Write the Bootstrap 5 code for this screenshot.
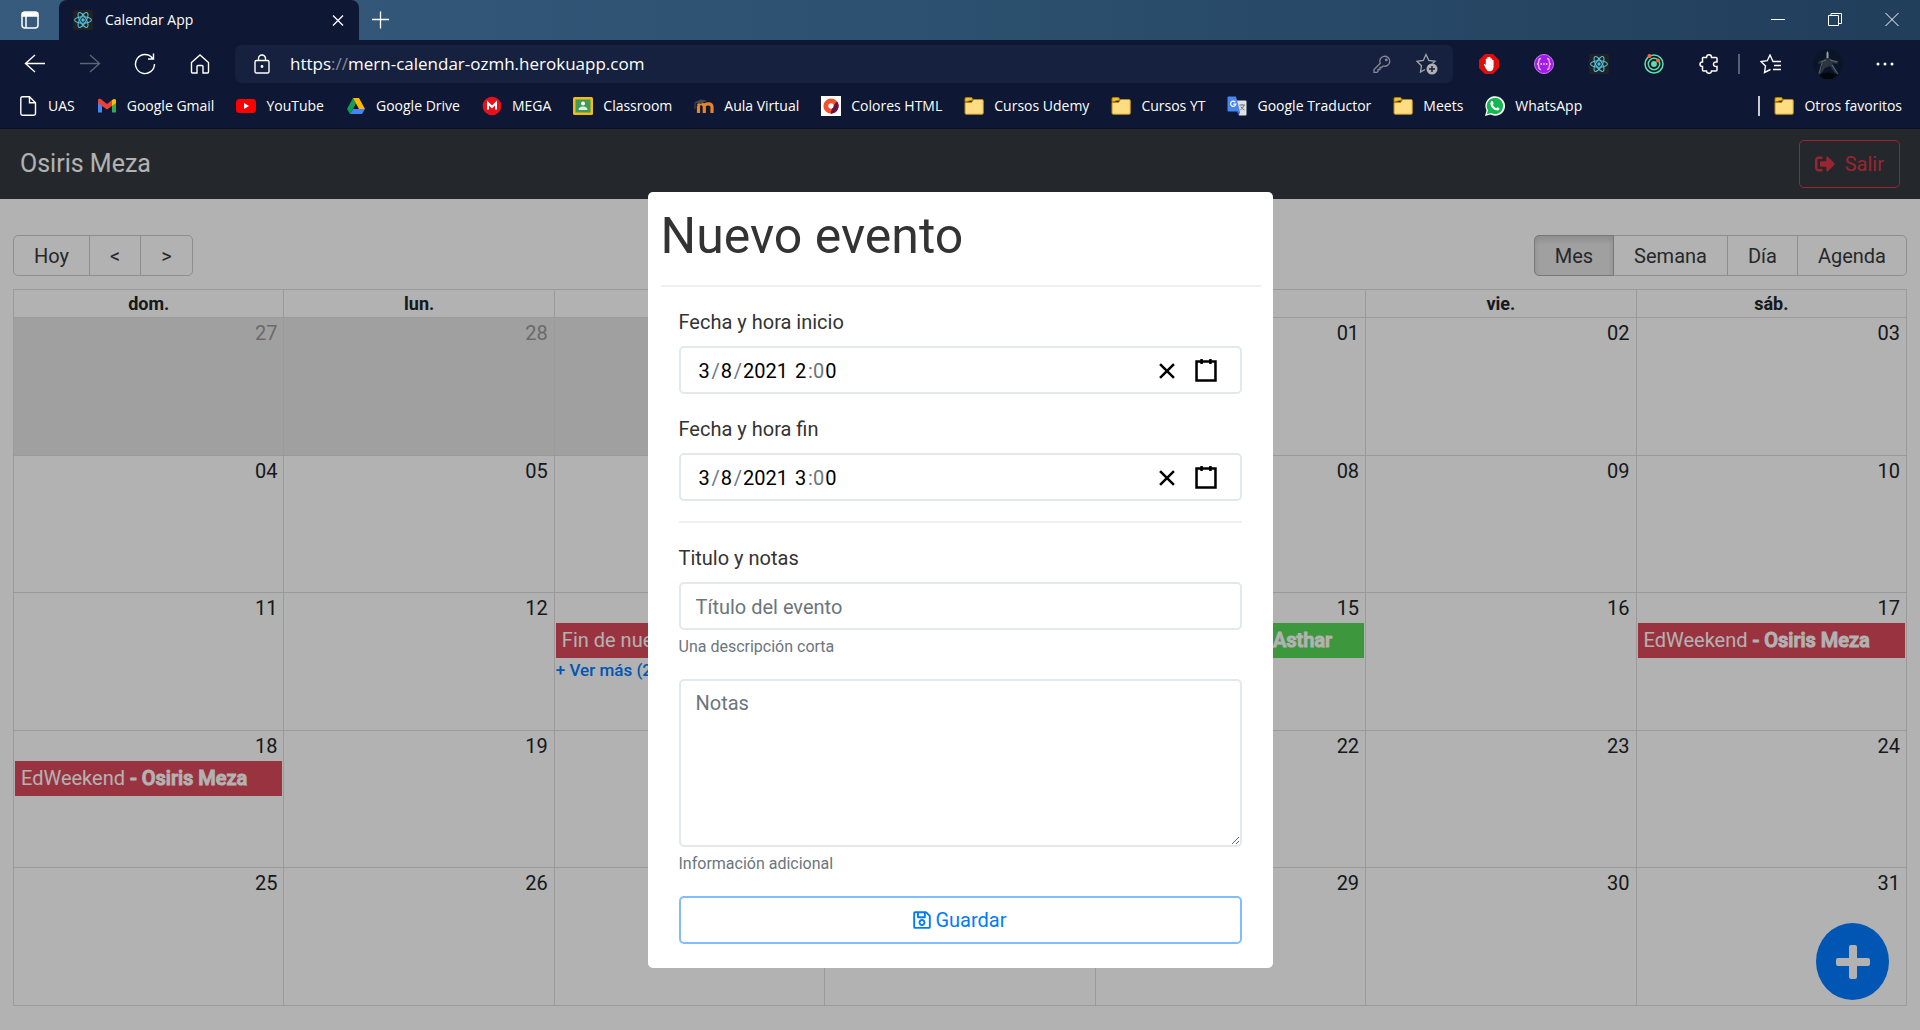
<!DOCTYPE html>
<html lang="es">
<head>
<meta charset="utf-8">
<meta name="viewport" content="width=device-width, initial-scale=1">
<title>Calendar App</title>
<link href="https://cdn.jsdelivr.net/npm/bootstrap@5.3.0/dist/css/bootstrap.min.css" rel="stylesheet">
<style>
  body { font-family: Roboto, "Liberation Sans", sans-serif; font-size: 20px; line-height: 30px; color: #212529; }
  svg { display: block; flex: none; }

  /* Browser window */
  .browser { height: 100vh; }
  .chrome { font-family: "Open Sans", "Noto Sans", sans-serif; color: #fff; background: #0e1733; border-bottom: 1px solid #0a1024; }
  .chrome button { background: none; border: 0; padding: 0; color: inherit; display: flex; align-items: center; justify-content: center; }
  .titlebar { height: 40px; background: linear-gradient(90deg, #365b7d, #2c506f 50%, #213e5b); }
  .tab-menu { width: 59px; }
  .tab-open { width: 300px; height: 40px; background: #0e1733; border-radius: 8px 8px 0 0; padding: 0 13px 0 14px; gap: 12px; font-size: 14px; }
  .tab-new { width: 42px; }
  .win-ctl { width: 57px; }
  .toolbar { height: 48px; padding: 0 7px; }
  .tool { width: 55px; height: 38px; }
  .tool-wide { width: 57px; height: 38px; }
  .address { height: 38px; background: #16213f; border-radius: 6px; padding: 0 4px 0 18px; }
  .url-text { font-size: 17px; margin-left: 19px; }
  .url-text i { font-style: normal; color: #868b9a; }
  .tool-sm { width: 45px; }
  .tool-sep { width: 2px; height: 20px; background: #5b606f; margin: 0 2px; }
  .bookmarks { height: 40px; padding: 0 18px 5px 18px; gap: 22px; font-size: 14px; }
  .bookmarks a { color: #fff; text-decoration: none; display: flex; align-items: center; gap: 10px; white-space: nowrap; }
  .bm-sep { width: 2px; height: 20px; background: #c8cad1; margin-right: -8px; }

  /* Calendar page */
  .site { position: relative; background: #fff; min-height: 0; }
  .site-nav { height: 70px; background: #343a40; padding: 0 20px; }
  .site-nav .navbar-brand { color: #fff; font-size: 25px; padding: 0; }
  .btn { font-size: 20px; line-height: 30px; border-radius: 5px; }
  .btn-exit { color: #dc3545; border-color: #dc3545; padding: 8px 15px; display: flex; align-items: center; gap: 10px; }
  .cal { padding: 36px 13px 24px; min-height: 0; isolation: isolate; }
  .cal-bar { margin-bottom: 13px; }
  .cal-bar .btn { color: #373a3c; background: #fff; border-color: #ccc; padding: 9px 20px 7px; line-height: 23px; }
  .cal-bar .btn.active { background: #e6e6e6; border-color: #adadad; box-shadow: inset 0 4px 6px rgba(0,0,0,.125); }
  .month { table-layout: fixed; width: 100%; border-collapse: collapse; }
  .month th, .month td { border: 1px solid #ddd; padding: 0; }
  .month th { text-align: center; font-size: 18px; font-weight: 700; line-height: 27px; height: 28px; }
  .month tbody tr { height: 20%; }
  .month td { vertical-align: top; text-align: right; }
  .month td.off { background: #e6e6e6; color: #999; }
  .month .num { padding-right: 6px; }
  .ev { display: block; text-align: left; background: #dc4a5c; color: #fff; text-decoration: none; line-height: 35px; padding: 0 6px; white-space: nowrap; overflow: hidden; margin: 0 1px; }
  .ev strong { font-weight: 500; -webkit-text-stroke: 1px currentColor; }
  .ev-green { background: #58d958; text-align: right; padding-right: 32px; }
  .ev-more { display: block; text-align: left; font-size: 17px; font-weight: 500; line-height: 24px; text-decoration: none; color: #007bff; margin-left: 1px; }
  .fab { position: absolute; right: 31px; bottom: 30px; width: 73px; height: 77px; border-radius: 50%; border: 0; background: #007bff; color: #fff; display: flex; align-items: center; justify-content: center; }

  /* Event form */
  .shade { position: absolute; inset: 0; background: rgba(0,0,0,.3); }
  .sheet { width: 625px; max-width: 96%; background: #fff; border-radius: 5px; padding: 14px 12px 4px 13px; color: #333; }
  .sheet h1 { font-size: 50px; line-height: 60px; font-weight: 400; margin: 0; }
  .sheet hr { margin: 20px 0; border-top: 2px solid #f0f0f0; opacity: 1; }
  .sheet hr.first { margin-top: 19px; }
  .fields { padding: 0 19px 0 18px; }
  .fields .grp { margin-bottom: 20px; }
  .fields label { display: block; margin-bottom: 9px; }
  .fields .form-control { border: 2px solid #e3e8ed; border-radius: 5px; font-size: 20px; line-height: 30px; padding: 8px 15px 6px; color: #333; }
  .fields .form-control::placeholder { color: #6c757d; }
  .fields textarea.form-control { height: 168px; resize: vertical; padding-top: 7px; }
  .fields .help { display: block; margin-top: 5px; font-size: 16px; line-height: 24px; color: #6c757d; }
  .fields .dt { height: 48px; padding: 2px 15px 0 17px; color: #6c757d; }
  .dt input { width: 14px; border: 0; outline: 0; padding: 0 1px; font: inherit; color: #000; background: none; }
  .dt input.yr { width: 47px; margin-right: 5px; }
  .dt button { border: 0; background: none; padding: 6px 8px; width: 39px; }
  .dt svg { width: 24px; height: 24px; }
  .btn-save { color: #007bff; border: 2px solid #80bdff; padding: 7px; gap: 4px; margin-bottom: 20px; }
</style>
</head>
<body>
<svg width="0" height="0" class="position-absolute" aria-hidden="true">
  <symbol id="i-react" viewBox="0 0 20 20"><rect width="20" height="20" rx="2" fill="#222"/><g fill="none" stroke="#53c1de" stroke-width="1.100"><ellipse cx="10" cy="10" rx="8.400" ry="3.200"/><ellipse cx="10" cy="10" rx="8.400" ry="3.200" transform="rotate(60 10 10)"/><ellipse cx="10" cy="10" rx="8.400" ry="3.200" transform="rotate(120 10 10)"/></g><circle cx="10" cy="10" r="1.700" fill="#53c1de"/></symbol>
  <symbol id="i-folder" viewBox="0 0 20 20"><path d="M1 6V2.800Q1 1.500 2.300 1.500H7Q8 1.500 8.300 2.500L8.800 4Z" fill="#f5c12e" stroke="#a87c0a"/><path d="M1 6.500H7.500L9.500 3.500H18Q19.300 3.500 19.300 4.800V17Q19.300 18.300 18 18.300H2.200Q1 18.300 1 17Z" fill="#ffdd80" stroke="#b88a14"/></symbol>
</svg>

<div class="browser d-flex flex-column">
  <header class="chrome">
    <div class="titlebar d-flex align-items-center">
      <button class="tab-menu" aria-label="Acciones de pestañas"><svg width="20" height="20" viewBox="0 0 20 20" fill="none" stroke="#fff" stroke-width="1.500"><rect x="2" y="2" width="16" height="16" rx="3"/><path d="M2.500 3H17.500V6H2.500Z" fill="#fff"/><path d="M6 6V18"/></svg></button>
      <div class="tab-open d-flex align-items-center">
        <svg width="20" height="20"><use href="#i-react"/></svg>
        <span class="flex-grow-1">Calendar App</span>
        <button aria-label="Cerrar pestaña"><svg width="16" height="16" viewBox="0 0 16 16" stroke="#fff" stroke-width="1.300"><path d="M3 3.500L13 13.500M13 3.500L3 13.500"/></svg></button>
      </div>
      <button class="tab-new" aria-label="Nueva pestaña"><svg width="18" height="18" viewBox="0 0 18 18" stroke="#fff" stroke-width="1.300"><path d="M9.500 0.500V17.500M1 8.500H18"/></svg></button>
      <div class="d-flex ms-auto">
        <button class="win-ctl" aria-label="Minimizar"><svg width="14" height="14" viewBox="0 0 14 14" stroke="#fff"><path d="M0 6.500H14"/></svg></button>
        <button class="win-ctl" aria-label="Restaurar"><svg width="14" height="14" viewBox="0 0 14 14" stroke="#fff" fill="none"><path d="M0.500 2.500H10.500V12.500H0.500ZM3 2V0.500H13.500V10.500H11"/></svg></button>
        <button class="win-ctl" aria-label="Cerrar"><svg width="14" height="14" viewBox="0 0 14 14" stroke="#fff"><path d="M0.500 0L13.500 13M13.500 0L0.500 13"/></svg></button>
      </div>
    </div>

    <div class="toolbar d-flex align-items-center">
      <button class="tool" aria-label="Atrás"><svg width="22" height="20" viewBox="0 0 22 20" fill="none" stroke="#fff" stroke-width="1.400"><path d="M21 9.500H1.500M11 1L1.500 9.500L11 18"/></svg></button>
      <button class="tool" aria-label="Adelante"><svg width="22" height="20" viewBox="0 0 22 20" fill="none" stroke="#5d6373" stroke-width="1.400"><path d="M1 9.500H20.500M11 1L20.500 9.500L11 18"/></svg></button>
      <button class="tool" aria-label="Actualizar"><svg width="22" height="22" viewBox="0 0 22 22" fill="none" stroke="#fff" stroke-width="1.400"><path d="M20.500 11A9.500 9.500 0 1 1 18.500 5.200M19.500 0.500V6H14"/></svg></button>
      <button class="tool" aria-label="Inicio"><svg width="20" height="20" viewBox="0 0 20 20" fill="none" stroke="#fff" stroke-width="1.400"><path d="M1.500 8.500L10 1L18.500 8.500V18Q18.500 19 17.500 19H13V12.500Q13 11.500 12 11.500H8Q7 11.500 7 12.500V19H2.500Q1.500 19 1.500 18Z"/></svg></button>
      <div class="address d-flex align-items-center flex-grow-1 ms-2">
        <svg width="18" height="20" viewBox="0 0 18 20" fill="none" stroke="#fff" stroke-width="1.400"><rect x="2" y="6.500" width="14" height="12.500" rx="1.500"/><path d="M5.500 6.500V4.500A3.500 3.500 0 0 1 12.500 4.500V6.500"/><circle cx="9" cy="12.500" r=".7" fill="#fff"/></svg>
        <span class="url-text flex-grow-1">https<i>://</i>mern-calendar-ozmh.herokuapp.com</span>
        <button class="tool-sm" aria-label="Contraseña"><svg width="18" height="18" viewBox="0 0 18 18" fill="none" stroke="#85868f" stroke-width="1.300"><path d="M7.200 8.300A5 5 0 1 1 10.200 11L8.500 12.500H7V14.500H5V16.500L4 17.300H1V14.500Z"/><circle cx="13.300" cy="4.900" r=".8"/></svg></button>
        <button class="tool-sm" aria-label="Agregar a favoritos"><svg width="22" height="22" viewBox="0 0 22 22" fill="none" stroke="#a3a3a3" stroke-width="1.300"><path d="M9 16.500L4.500 19L5.500 12.700L1 8.300L7.300 7.400L10 1.500L12.800 7.400L19 8.300L16.500 10.500"/><circle cx="16" cy="16" r="5.500" fill="#b0b0b0" stroke="none"/><path d="M16 13V19M13 16H19" stroke="#16213f" stroke-width="1.500"/></svg></button>
      </div>
      <div class="d-flex align-items-center ps-2">
        <button class="tool" aria-label="Bloqueador"><svg width="20" height="20" viewBox="0 0 20 20"><path d="M6 0H14L20 6V14L14 20H6L0 14V6Z" fill="#e00d0d"/><path d="M4.800 10.300Q5.500 9.300 6.800 11V5Q7.500 4 8.300 5V3.500Q9 2.600 9.800 3.500V3Q10.600 2.200 11.400 3.200V4.500Q12.200 3.800 13 4.700V6Q14 5.300 14.600 6.500V13Q14 17.300 10.700 17.300Q8 17.300 6.800 14.500Z" fill="#fff"/></svg></button>
        <button class="tool" aria-label="JSON"><svg width="20" height="20" viewBox="0 0 20 20"><circle cx="10" cy="10" r="9.500" fill="#a21be8" stroke="#c77bf0"/><g fill="none" stroke="#e4b9fb" stroke-width="1.300"><path d="M7 4.500Q4.800 4.500 4.800 7Q4.800 10 3 10Q4.800 10 4.800 13Q4.800 15.500 7 15.500M13 4.500Q15.200 4.500 15.200 7Q15.200 10 17 10Q15.200 10 15.200 13Q15.200 15.500 13 15.500"/><path d="M6.500 10H13.500" stroke-dasharray="1.500 1.200" stroke-width="2"/></g></svg></button>
        <button class="tool" aria-label="React"><svg width="20" height="20"><use href="#i-react"/></svg></button>
        <button class="tool" aria-label="Rastreo"><svg width="20" height="20" viewBox="0 0 20 20" fill="none" stroke="#5be0a6" stroke-width="1.500"><circle cx="10" cy="10" r="9"/><circle cx="10" cy="10" r="5.700"/><circle cx="10" cy="10" r="2.200" fill="#5be0a6"/><g stroke="none" fill="#f26a3d"><circle cx="5.500" cy="2" r="2"/><circle cx="14" cy="6.500" r="2"/></g></svg></button>
        <button class="tool" aria-label="Extensiones"><svg width="20" height="20" viewBox="0 0 20 20" fill="none" stroke="#fff" stroke-width="1.500"><path d="M4 3.500H7.500Q7.500 0.800 10 0.800Q12.500 0.800 12.500 3.500H17Q18 3.500 18 4.500V8Q14.500 7.500 14.500 10.300Q14.500 13 18 12.500V16Q18 17 17 17H12.500Q12.500 19.300 10 19.300Q7.500 19.300 7.500 17H4.500Q3.500 17 3.500 16V12.500Q1 12.500 1 10.200Q1 8 3.500 8V4Z"/></svg></button>
        <div class="tool-sep"></div>
        <button class="tool-wide" aria-label="Favoritos"><svg width="22" height="20" viewBox="0 0 22 20" fill="none" stroke="#fff" stroke-width="1.400"><path d="M21 7.500H13L10 1L7.300 6.700L1 7.500L5.500 12L4.500 18.500L10.500 15.500M14 11.500H21M13 15.500H21"/></svg></button>
        <button class="tool-wide" aria-label="Perfil"><svg width="30" height="30" viewBox="0 0 30 30"><circle cx="15" cy="15" r="15" fill="#0b1528"/><path d="M13 9L10 11L6 12L5 15L9 14V18L5 25L7 26L12 19L17 17L22 24L25 25L21 17L19 14L24 15L26 12L20 11L16 9Z" fill="#2c3442"/><path d="M9 14L6 24M19 16L25 25M8 13L13 11M17 11L24 13" stroke="#6d7582" stroke-width=".8" fill="none"/><path d="M13.500 9V4L14.500 2L15.500 4V9Z" fill="#9a9fa8"/><path d="M6 26Q15 21 24 26L19 30H11Z" fill="#050609"/></svg></button>
        <button class="tool-wide" aria-label="Más"><svg width="18" height="4" viewBox="0 0 18 4" fill="#fff"><circle cx="2" cy="2" r="1.500"/><circle cx="9" cy="2" r="1.500"/><circle cx="16" cy="2" r="1.500"/></svg></button>
      </div>
    </div>

    <nav class="bookmarks d-flex align-items-center" aria-label="Favoritos">
      <a href="#"><svg width="20" height="20" viewBox="0 0 20 20" fill="none" stroke="#fff" stroke-width="1.400"><path d="M4.500 0.800H11.500L17.500 6.800V17.500Q17.500 19.200 15.800 19.200H4.500Q2.800 19.200 2.800 17.500V2.500Q2.800 0.800 4.500 0.800ZM11.500 0.800V6.800H17.500"/></svg>UAS</a>
      <a href="#"><svg width="20" height="20" viewBox="0 0 20 20"><path d="M1 5V16.500H5V9Z" fill="#4285f4"/><path d="M19 5V16.500H15V9Z" fill="#34a853"/><path d="M1 3.500Q3 2 5 4L10 8L15 4V10L10 13.500L5 10L1 7Z" fill="#ea4335"/><path d="M15 4Q18 2 19 4V7L15 10Z" fill="#fbbc04"/></svg>Google Gmail</a>
      <a href="#"><svg width="20" height="20" viewBox="0 0 20 20"><rect y="3" width="20" height="14" rx="3.500" fill="#f00"/><path d="M8 7L13 10L8 13Z" fill="#fff"/></svg>YouTube</a>
      <a href="#"><svg width="20" height="20" viewBox="0 0 20 20"><path d="M7 2L10 7.500L4 18L1 13Z" fill="#0f9d58"/><path d="M7 2H13L19 13H13Z" fill="#ffba00"/><path d="M7 13H19L16 18H4Z" fill="#4285f4"/></svg>Google Drive</a>
      <a href="#"><svg width="20" height="20" viewBox="0 0 20 20"><circle cx="10" cy="10" r="9.300" fill="#e8101b"/><path d="M6 13.500V7L10 11L14 7V13.500" fill="none" stroke="#fff" stroke-width="2"/></svg>MEGA</a>
      <a href="#"><svg width="20" height="20" viewBox="0 0 20 20"><rect y="1" width="20" height="18" rx="1.500" fill="#f4bb16"/><rect x="2.500" y="3.500" width="15" height="13" fill="#3f9b56"/><circle cx="10" cy="7.500" r="2" fill="#fff"/><path d="M5.500 14Q5.500 10.500 10 10.500Q14.500 10.500 14.500 14Z" fill="#dff0e3"/></svg>Classroom</a>
      <a href="#"><svg width="20" height="20" viewBox="0 0 20 20"><path d="M4.500 17V9.500M10.300 17V10.500Q10.500 7.800 14.400 7.800Q18 7.800 18 11V17" fill="none" stroke="#e8842a" stroke-width="3.200"/><path d="M4 9.500Q7 6 10 9.500" fill="none" stroke="#e8842a" stroke-width="3"/><path d="M0 6.500L7 3.500L13 4.500L7 8Z" fill="#4a4a4c"/><path d="M1 7V13" stroke="#4a4a4c"/></svg>Aula Virtual</a>
      <a href="#"><svg width="20" height="20" viewBox="0 0 20 20"><rect width="20" height="20" fill="#fff"/><circle cx="10" cy="10" r="5.200" fill="none" stroke="#f4502d" stroke-width="4.800"/><path d="M16 5.300A7.600 7.600 0 0 1 9.500 17.600L11 12.700Q13 11.500 12.700 9.500Z" fill="#6b1240"/></svg>Colores HTML</a>
      <a href="#"><svg width="20" height="20"><use href="#i-folder"/></svg>Cursos Udemy</a>
      <a href="#"><svg width="20" height="20"><use href="#i-folder"/></svg>Cursos YT</a>
      <a href="#"><svg width="20" height="20" viewBox="0 0 20 20"><path d="M8 4.500H18.500Q19.500 4.500 19.500 5.500V18.500Q19.500 19.500 18.500 19.500H12Z" fill="#dfe1e5"/><path d="M1 0.500H9L13 15.500H1.500Q0.500 15.500 0.500 14.500V1.500Z" fill="#4a86f0"/><path d="M13 15.500L12 19.500L9.500 15.500Z" fill="#2f5ec4"/><path d="M8.300 6.200A2.600 2.600 0 1 0 8.800 8.200H6.300" fill="none" stroke="#fff" stroke-width="1.200"/><path d="M12.500 9H18M15.200 8V9M17 9Q16 12.500 13.300 14M13.800 10.500Q15 13 17.500 14" fill="none" stroke="#6a7a80"/></svg>Google Traductor</a>
      <a href="#"><svg width="20" height="20"><use href="#i-folder"/></svg>Meets</a>
      <a href="#"><svg width="20" height="20" viewBox="0 0 20 20"><path d="M0 20L1.500 14.500A9.800 9.800 0 1 1 5.500 18.600Z" fill="#fff"/><path d="M1.800 18.200L3 14.300A8.200 8.200 0 1 1 6 17.100Z" fill="#14b850"/><path d="M6 5.500Q7.500 4.500 8 6L8.700 7.700L7.800 9Q9 11.300 11.300 12.200L12.500 11.200L14.500 12.300Q14.500 14.500 12.300 14.600Q6 13.500 5.300 7.500Z" fill="#fff"/></svg>WhatsApp</a>
      <div class="bm-sep ms-auto"></div>
      <a href="#"><svg width="20" height="20"><use href="#i-folder"/></svg>Otros favoritos</a>
    </nav>
  </header>

  <div class="site d-flex flex-column flex-grow-1">
    <nav class="site-nav navbar d-flex justify-content-between">
      <span class="navbar-brand">Osiris Meza</span>
      <button class="btn btn-exit"><svg width="20" height="20" viewBox="0 0 512 512" fill="currentColor"><path d="M497 273L329 441c-15 15-41 4.500-41-17v-96H152c-13.300 0-24-10.700-24-24v-96c0-13.300 10.700-24 24-24h136V88c0-21.400 25.900-32 41-17l168 168c9.300 9.400 9.300 24.600 0 34zM192 436v-40c0-6.600-5.400-12-12-12H96c-17.700 0-32-14.300-32-32V160c0-17.700 14.300-32 32-32h84c6.600 0 12-5.400 12-12V76c0-6.600-5.400-12-12-12H96c-53 0-96 43-96 96v192c0 53 43 96 96 96h84c6.600 0 12-5.400 12-12z"/></svg>Salir</button>
    </nav>

    <main class="cal d-flex flex-column flex-grow-1">
      <div class="cal-bar d-flex justify-content-between">
        <div class="btn-group"><button class="btn">Hoy</button><button class="btn">&lt;</button><button class="btn">&gt;</button></div>
        <div class="btn-group"><button class="btn active">Mes</button><button class="btn">Semana</button><button class="btn">Día</button><button class="btn">Agenda</button></div>
      </div>
      <table class="month flex-grow-1 d-table h-100">
        <thead><tr><th>dom.</th><th>lun.</th><th>mar.</th><th>mié.</th><th>jue.</th><th>vie.</th><th>sáb.</th></tr></thead>
        <tbody>
          <tr><td class="off"><div class="num">27</div></td><td class="off"><div class="num">28</div></td><td class="off"><div class="num">29</div></td><td class="off"><div class="num">30</div></td><td><div class="num">01</div></td><td><div class="num">02</div></td><td><div class="num">03</div></td></tr>
          <tr><td><div class="num">04</div></td><td><div class="num">05</div></td><td><div class="num">06</div></td><td><div class="num">07</div></td><td><div class="num">08</div></td><td><div class="num">09</div></td><td><div class="num">10</div></td></tr>
          <tr><td><div class="num">11</div></td><td><div class="num">12</div></td><td><div class="num">13</div><a class="ev" href="#">Fin de nuevo</a><a class="ev-more" href="#">+ Ver más (2)</a></td><td><div class="num">14</div></td><td><div class="num">15</div><a class="ev ev-green" href="#"><strong>- Asthar</strong></a></td><td><div class="num">16</div></td><td><div class="num">17</div><a class="ev" href="#">EdWeekend <strong>- Osiris Meza</strong></a></td></tr>
          <tr><td><div class="num">18</div><a class="ev" href="#">EdWeekend <strong>- Osiris Meza</strong></a></td><td><div class="num">19</div></td><td><div class="num">20</div></td><td><div class="num">21</div></td><td><div class="num">22</div></td><td><div class="num">23</div></td><td><div class="num">24</div></td></tr>
          <tr><td><div class="num">25</div></td><td><div class="num">26</div></td><td><div class="num">27</div></td><td><div class="num">28</div></td><td><div class="num">29</div></td><td><div class="num">30</div></td><td><div class="num">31</div></td></tr>
        </tbody>
      </table>
    </main>

    <button class="fab" aria-label="Nuevo evento"><svg width="34" height="34" viewBox="0 0 34 34" fill="#fff"><path d="M15 0H19Q21 0 21 2V13H32Q34 13 34 15V19Q34 21 32 21H21V32Q21 34 19 34H15Q13 34 13 32V21H2Q0 21 0 19V15Q0 13 2 13H13V2Q13 0 15 0Z"/></svg></button>

    <div class="shade d-flex align-items-center justify-content-center">
      <div class="sheet" role="dialog" aria-labelledby="dlg">
        <h1 id="dlg">Nuevo evento</h1>
        <hr class="first">
        <form class="fields">
          <div class="grp">
            <label for="d1">Fecha y hora inicio</label>
            <div class="form-control dt d-flex align-items-center">
              <input id="d1" value="3">/<input value="8" aria-label="Mes">/<input class="yr" value="2021" aria-label="Año"><input value="2" aria-label="Hora">:<span>0</span><input value="0" aria-label="Minuto">
              <button type="button" class="ms-auto" aria-label="Borrar"><svg viewBox="0 0 19 19" stroke="#000" stroke-width="2"><path d="M4 4L15 15M15 4L4 15"/></svg></button>
              <button type="button" aria-label="Calendario"><svg viewBox="0 0 19 19" stroke="#000" stroke-width="2" fill="none"><path d="M2 2H17V17H2ZM6 0V4M13 0V4"/></svg></button>
            </div>
          </div>
          <div class="grp">
            <label for="d2">Fecha y hora fin</label>
            <div class="form-control dt d-flex align-items-center">
              <input id="d2" value="3">/<input value="8" aria-label="Mes">/<input class="yr" value="2021" aria-label="Año"><input value="3" aria-label="Hora">:<span>0</span><input value="0" aria-label="Minuto">
              <button type="button" class="ms-auto" aria-label="Borrar"><svg viewBox="0 0 19 19" stroke="#000" stroke-width="2"><path d="M4 4L15 15M15 4L4 15"/></svg></button>
              <button type="button" aria-label="Calendario"><svg viewBox="0 0 19 19" stroke="#000" stroke-width="2" fill="none"><path d="M2 2H17V17H2ZM6 0V4M13 0V4"/></svg></button>
            </div>
          </div>
          <hr>
          <div class="grp">
            <label for="ttl">Titulo y notas</label>
            <input id="ttl" class="form-control" placeholder="Título del evento">
            <small class="help">Una descripción corta</small>
          </div>
          <div class="grp">
            <textarea class="form-control" placeholder="Notas" aria-label="Notas"></textarea>
            <small class="help">Información adicional</small>
          </div>
          <button type="submit" class="btn btn-save w-100 d-flex align-items-center justify-content-center"><svg width="18" height="20" viewBox="0 0 448 512" fill="currentColor"><path d="M433.941 129.941l-83.882-83.882A48 48 0 0 0 316.118 32H48C21.490 32 0 53.490 0 80v352c0 26.510 21.490 48 48 48h352c26.510 0 48-21.490 48-48V163.882a48 48 0 0 0-14.059-33.941zM272 80v80H144V80h128zm122 352H54a6 6 0 0 1-6-6V86a6 6 0 0 1 6-6h42v104c0 13.255 10.745 24 24 24h176c13.255 0 24-10.745 24-24V83.882l78.243 78.243a6 6 0 0 1 1.757 4.243V426a6 6 0 0 1-6 6zM224 232c-48.523 0-88 39.477-88 88s39.477 88 88 88 88-39.477 88-88-39.477-88-88-88zm0 128c-22.056 0-40-17.944-40-40s17.944-40 40-40 40 17.944 40 40-17.944 40-40 40z"/></svg>Guardar</button>
        </form>
      </div>
    </div>
  </div>
</div>
<script src="https://cdn.jsdelivr.net/npm/bootstrap@5.3.0/dist/js/bootstrap.bundle.min.js"></script>
</body>
</html>
